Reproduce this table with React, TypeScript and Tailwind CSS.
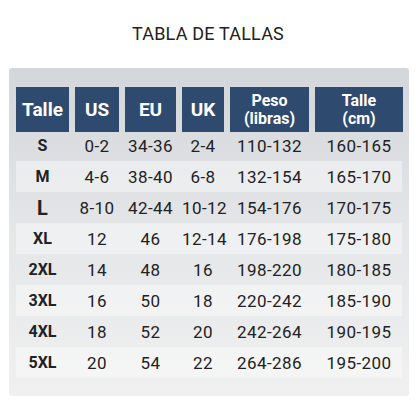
const headers = [
  { label: 'Talle' },
  { label: 'US' },
  { label: 'EU' },
  { label: 'UK' },
  { label: 'Peso', sub: '(libras)' },
  { label: 'Talle', sub: '(cm)' },
];

const rows = [
  ['S', '0-2', '34-36', '2-4', '110-132', '160-165'],
  ['M', '4-6', '38-40', '6-8', '132-154', '165-170'],
  ['L', '8-10', '42-44', '10-12', '154-176', '170-175'],
  ['XL', '12', '46', '12-14', '176-198', '175-180'],
  ['2XL', '14', '48', '16', '198-220', '180-185'],
  ['3XL', '16', '50', '18', '220-242', '185-190'],
  ['4XL', '18', '52', '20', '242-264', '190-195'],
  ['5XL', '20', '54', '22', '264-286', '195-200'],
];

const cols = 'grid grid-cols-[53px_44px_51px_42px_79px_88px] gap-x-[6px]';

export default function App() {
  return (
    <div className="h-[416px] w-[416px] bg-white font-['Roboto',sans-serif] text-[#222]">
      <h1 className="pt-[23px] text-center text-[18px] leading-[22px] tracking-[0.2px]">
        TABLA DE TALLAS
      </h1>

      {/* Panel */}
      <div className="mx-[9px] mt-[23px] w-[400px] rounded-[3px] bg-gradient-to-b from-[#d3d6da] via-[#e4e6e8] to-[#f0f0f0] px-[7px] pb-[18px] pt-[19px]">
        <div className={cols}>
          {headers.map((h, i) => (
            <div
              key={i}
              className="flex h-[45px] flex-col items-center justify-center bg-[#2f4a6f] font-bold text-white"
            >
              {h.sub ? (
                <>
                  <span className="text-[16px] leading-[18px]">{h.label}</span>
                  <span className="text-[16px] leading-[18px]">{h.sub}</span>
                </>
              ) : (
                <span className="text-[19px] leading-[22px]">{h.label}</span>
              )}
            </div>
          ))}
        </div>

        <div className="-mt-[2px]">
          {rows.map((r, ri) => (
            <div
              key={ri}
              className={`${cols} h-[31px] items-center ${ri % 2 === 1 ? 'bg-white/40' : ''}`}
            >
              {r.map((c, ci) => (
                <div
                  key={ci}
                  className={`whitespace-nowrap text-center leading-[20px] ${
                    ci === 0
                      ? c === 'L'
                        ? 'text-[20px] font-bold'
                        : 'text-[16px] font-bold'
                      : 'text-[17px] tracking-[0.4px]'
                  }`}
                >
                  {c}
                </div>
              ))}
            </div>
          ))}
        </div>
      </div>
    </div>
  );
}
